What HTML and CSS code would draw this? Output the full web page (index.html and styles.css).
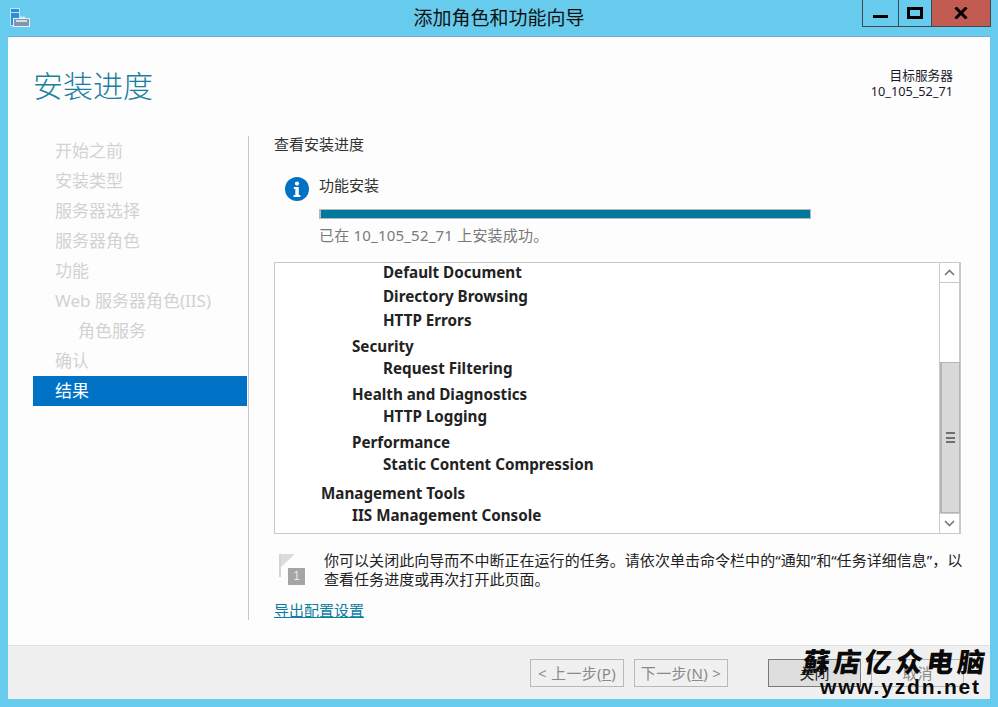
FILE: index.html
```html
<!DOCTYPE html>
<html lang="zh-CN">
<head>
<meta charset="utf-8">
<title>添加角色和功能向导</title>
<link rel="stylesheet" href="styles.css">
</head>
<body>
<div class="window">
  <header class="titlebar">
    <svg class="app-icon" width="21" height="20" viewBox="0 0 21 20">
      <rect x="0.5" y="0.5" width="9" height="17" fill="#2b8fdc" stroke="#bfe3f6"/>
      <rect x="1" y="4" width="8" height="1" fill="#bfe0f5"/>
      <path d="M10 8.5h5v3h-5z" fill="#cfe6f5"/>
      <rect x="3.5" y="10.5" width="16" height="8" fill="#7f98b0" stroke="#e4f0f8"/>
      <rect x="6" y="12" width="11" height="2" fill="#d5dde4"/>
    </svg>
    <div class="title">添加角色和功能向导</div>
    <div class="controls">
      <div class="ctl ctl-min"><span class="min-bar"></span></div>
      <div class="ctl ctl-max"><span class="max-box"></span></div>
      <div class="ctl ctl-close">
        <svg width="14" height="12" viewBox="0 0 14 12"><path d="M1.5 0.5 12.5 11.5M12.5 0.5 1.5 11.5" stroke="#000" stroke-width="3" fill="none"/></svg>
      </div>
    </div>
  </header>
  <div class="client">
    <div class="page-head">
      <h1 class="page-title">安装进度</h1>
      <div class="target"><div>目标服务器</div><div>10_105_52_71</div></div>
    </div>
    <div class="page-body">
      <nav class="steps">
        <div class="step">开始之前</div>
        <div class="step">安装类型</div>
        <div class="step">服务器选择</div>
        <div class="step">服务器角色</div>
        <div class="step">功能</div>
        <div class="step">Web 服务器角色(IIS)</div>
        <div class="step step-sub">角色服务</div>
        <div class="step">确认</div>
        <div class="step step-on">结果</div>
      </nav>
      <main class="content">
        <div class="lead">查看安装进度</div>
        <div class="status">
          <svg class="info" width="24" height="24" viewBox="0 0 24 24">
            <circle cx="12" cy="12" r="12" fill="#0072c6"/>
            <circle cx="12" cy="6.6" r="2.1" fill="#fff"/>
            <path d="M8.8 10h5v8h1.6v2H8.6v-2h1.7v-6H8.8z" fill="#fff"/>
          </svg>
          <div class="status-main">
            <div class="status-name">功能安装</div>
            <div class="bar"></div>
            <div class="status-msg">已在 10_105_52_71 上安装成功。</div>
          </div>
        </div>
        <div class="listbox">
          <div class="tree">
            <div class="row l3">Default Document</div>
            <div class="row l3">Directory Browsing</div>
            <div class="row l3">HTTP Errors</div>
            <div class="row l2">Security</div>
            <div class="row l3">Request Filtering</div>
            <div class="row l2">Health and Diagnostics</div>
            <div class="row l3">HTTP Logging</div>
            <div class="row l2">Performance</div>
            <div class="row l3">Static Content Compression</div>
            <div class="row l1">Management Tools</div>
            <div class="row l2">IIS Management Console</div>
          </div>
          <div class="scrollbar">
            <div class="sb-btn">
              <svg width="11" height="7" viewBox="0 0 11 7"><path d="M1 6 5.5 1.5 10 6" stroke="#777" stroke-width="1.6" fill="none"/></svg>
            </div>
            <div class="sb-track"></div>
            <div class="sb-thumb"><span class="grip"></span></div>
            <div class="sb-btn sb-btn-end">
              <svg width="11" height="7" viewBox="0 0 11 7"><path d="M1 1 5.5 5.5 10 1" stroke="#777" stroke-width="1.6" fill="none"/></svg>
            </div>
          </div>
        </div>
        <div class="note">
          <svg class="flag" width="28" height="32" viewBox="0 0 28 32">
            <rect x="0" y="0" width="2" height="23" fill="#d4d4d4"/>
            <path d="M2 0H16L2 13z" fill="#dcdcdc"/>
            <rect x="9" y="14" width="17" height="17" fill="#a5a5a5"/>
          </svg>
          <span class="flag-num">1</span>
          <p class="note-text">你可以关闭此向导而不中断正在运行的任务。请依次单击命令栏中的“通知”和“任务详细信息”，以查看任务进度或再次打开此页面。</p>
        </div>
        <a class="export" href="#">导出配置设置</a>
      </main>
    </div>
    <footer class="footer">
      <button class="btn btn-off btn-nav">&lt; 上一步(<u>P</u>)</button>
      <button class="btn btn-off btn-nav">下一步(<u>N</u>) &gt;</button>
      <button class="btn btn-close btn-wide">关闭</button>
      <button class="btn btn-off btn-wide">取消</button>
    </footer>
  </div>
  <div class="watermark">
    <div class="wm-cn">蘇店亿众电脑</div>
    <div class="wm-en">www.yzdn.net</div>
  </div>
</div>
</body>
</html>
```
FILE: styles.css
```css
* { box-sizing: border-box; }
html, body { margin: 0; padding: 0; }
body {
  width: 998px;
  height: 707px;
  overflow: hidden;
  background: #66cbec;
  font-family: "Noto Sans", "Noto Sans CJK SC", sans-serif;
}
.window {
  position: relative;
  width: 998px;
  height: 707px;
  display: flex;
  flex-direction: column;
  padding: 0 8px 8px;
}
.titlebar {
  height: 36px;
  flex: none;
  display: flex;
  align-items: flex-start;
  position: relative;
  margin: 0 -8px;
}
.app-icon { position: absolute; left: 10px; top: 8px; }
.title {
  flex: 1;
  text-align: center;
  font-size: 19px;
  line-height: 24px;
  padding-top: 6px;
  color: #111;
}
.controls {
  position: absolute;
  right: 7px;
  top: 0;
  display: flex;
  height: 27px;
  border: 1px solid #3e4a50;
  border-top: 0;
}
.ctl { display: flex; align-items: center; justify-content: center; height: 26px; }
.ctl-min { width: 36px; border-right: 1px solid #3e4a50; }
.ctl-max { width: 33px; border-right: 1px solid #3e4a50; }
.ctl-close { width: 58px; background: #c25b52; }
.min-bar { width: 15px; height: 3px; background: #000; margin-top: 7px; }
.max-box { width: 16px; height: 12px; border: 3px solid #000; }
.client {
  flex: 1;
  min-height: 0;
  display: flex;
  flex-direction: column;
  background: #fdfdfd;
  border-top: 1px solid #6eaec9;
}
.page-head {
  height: 98px;
  flex: none;
  display: flex;
  justify-content: space-between;
  padding: 29px 37px 0 25px;
}
.page-title {
  margin: 0;
  font-size: 30px;
  line-height: 40px;
  font-weight: 300;
  color: #1a7e9f;
}
.target {
  font-size: 12.7px;
  line-height: 16px;
  margin-top: 1px;
  color: #1a1a2a;
  text-align: right;
}
.page-body { flex: 1; min-height: 0; display: flex; }
.steps {
  width: 216px;
  flex: none;
  margin-left: 25px;
  margin-top: 1px;
  height: 484px;
  border-right: 1px solid #c6c6c6;
  padding-right: 1px;
  display: flex;
  flex-direction: column;
  font-size: 17px;
  color: #d2d2d2;
}
.step { height: 30px; line-height: 30px; padding-left: 22px; flex: none; }
.step-sub { padding-left: 45px; }
.step-on { background: #0072c6; color: #fff; }
.content { flex: 1; min-width: 0; padding: 0 29px 0 25px; display: flex; flex-direction: column; }
.lead { font-size: 15px; line-height: 18px; color: #333; }
.status { display: flex; gap: 10px; margin: 23px 0 0 11px; }
.info { flex: none; margin-top: 1px; }
.status-main { flex: 1; }
.status-name { font-size: 15px; line-height: 18px; color: #333; }
.bar {
  width: 492px;
  height: 10px;
  margin-top: 15px;
  background: #00799c;
  border: 1px solid #b8b8b8;
  border-width: 1px 1px 1px 2px;
}
.status-msg { font-size: 15px; line-height: 18px; margin-top: 7px; color: #7a7a7a; letter-spacing: 0.2px; }
.listbox {
  margin-top: 18px;
  height: 272px;
  border: 1px solid #c9c9c9;
  background: #fff;
  display: flex;
  flex: none;
}
.tree { flex: 1; font-size: 15.2px; font-weight: 700; color: #222; }
.row { height: 18px; line-height: 18px; white-space: nowrap; }
.l3 { padding-left: 108px; margin-top: 4px; }
.l3 + .l3 { margin-top: 6px; }
.l3:first-child { margin-top: 0; }
.l2 { padding-left: 77px; margin-top: 8px; }
.l1 { padding-left: 46px; margin-top: 11px; }
.l1 + .l2 { margin-top: 4px; }
.scrollbar {
  width: 21px;
  flex: none;
  display: flex;
  flex-direction: column;
  border-left: 1px solid #c9c9c9;
}
.sb-btn { height: 20px; flex: none; display: flex; align-items: center; justify-content: center; border-bottom: 1px solid #c9c9c9; border-right: 1px solid #c9c9c9; }
.sb-btn-end { border-bottom: 0; border-top: 1px solid #c9c9c9; }
.sb-track { height: 79px; flex: none; border-right: 1px solid #c9c9c9; }
.sb-thumb {
  flex: 1;
  background: #d8d8d8;
  border: 1px solid #b5b5b5;
  border-left-width: 2px;
  display: flex;
  align-items: center;
  justify-content: center;
}
.grip { width: 9px; height: 11px; border-top: 2px solid #6f6f6f; border-bottom: 2px solid #6f6f6f; background: linear-gradient(#6f6f6f, #6f6f6f) center / 100% 2px no-repeat; }
.note { position: relative; display: flex; margin-top: 17px; gap: 17px; padding-left: 5px; }
.flag { flex: none; margin-top: 3px; }
.flag-num { position: absolute; left: 14px; top: 17px; width: 17px; text-align: center; font-family: "Liberation Sans", sans-serif; font-size: 12px; line-height: 17px; color: #e8e8e8; }
.note-text { margin: 0; font-size: 15px; line-height: 19px; color: #222; flex: none; width: 645px; letter-spacing: 0.04px; }
.export { margin-top: 12px; font-size: 15px; line-height: 18px; color: #0e7ea0; text-decoration: underline; align-self: flex-start; }
.footer {
  height: 54px;
  flex: none;
  display: flex;
  align-items: flex-start;
  background: #f0f0f0;
  border-top: 1px solid #e2e2e2;
  padding: 13px 0 0 522px;
  gap: 10px;
}
.btn {
  height: 28px;
  font-family: inherit;
  font-size: 15px;
  padding: 0;
  background: #f0f0f0;
  line-height: 24px;
}
.btn-nav { width: 94px; letter-spacing: 0.3px; }
.btn-wide { width: 93px; }
.btn-off { border: 1px solid #b9b9b9; color: #8a8a8a; }
.btn-close { border: 1px solid #7a7a7a; background: #dedede; color: #222; margin-left: 30px; }
.watermark {
  position: absolute;
  left: 803px;
  top: 645px;
  width: 186px;
  pointer-events: none;
  color: #0a0a0a;
}
.wm-cn { font-family: "Noto Sans CJK SC", sans-serif; font-weight: 900; font-size: 27px; line-height: 32px; letter-spacing: 4px; white-space: nowrap; transform: skewX(-8deg); }
.wm-en { font-family: "Liberation Sans", sans-serif; font-size: 21px; line-height: 20px; letter-spacing: 1.8px; padding-left: 17px; white-space: nowrap; font-weight: 700; }
```
